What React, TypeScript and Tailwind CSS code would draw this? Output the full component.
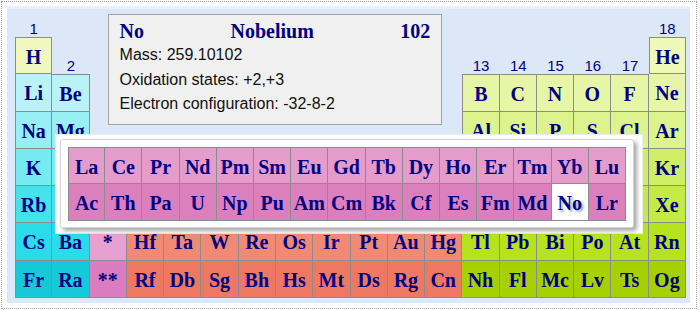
import React from "react";

type Sym = string | null;

const ROWS: Sym[][] = [
  ["H", null, null, null, null, null, null, null, null, null, null, null, null, null, null, null, null, "He"],
  ["Li", "Be", null, null, null, null, null, null, null, null, null, null, "B", "C", "N", "O", "F", "Ne"],
  ["Na", "Mg", null, null, null, null, null, null, null, null, null, null, "Al", "Si", "P", "S", "Cl", "Ar"],
  ["K", "Ca", "Sc", "Ti", "V", "Cr", "Mn", "Fe", "Co", "Ni", "Cu", "Zn", "Ga", "Ge", "As", "Se", "Br", "Kr"],
  ["Rb", "Sr", "Y", "Zr", "Nb", "Mo", "Tc", "Ru", "Rh", "Pd", "Ag", "Cd", "In", "Sn", "Sb", "Te", "I", "Xe"],
  ["Cs", "Ba", "*", "Hf", "Ta", "W", "Re", "Os", "Ir", "Pt", "Au", "Hg", "Tl", "Pb", "Bi", "Po", "At", "Rn"],
  ["Fr", "Ra", "**", "Rf", "Db", "Sg", "Bh", "Hs", "Mt", "Ds", "Rg", "Cn", "Nh", "Fl", "Mc", "Lv", "Ts", "Og"],
];

const LANTHANIDES = ["La", "Ce", "Pr", "Nd", "Pm", "Sm", "Eu", "Gd", "Tb", "Dy", "Ho", "Er", "Tm", "Yb", "Lu"];
const ACTINIDES = ["Ac", "Th", "Pa", "U", "Np", "Pu", "Am", "Cm", "Bk", "Cf", "Es", "Fm", "Md", "No", "Lr"];

// labels shown in the empty cell above each group
const GROUP_LABELS: Record<number, string> = { 1: "2", 12: "13", 13: "14", 14: "15", 15: "16", 16: "17" };

const sBlock = [
  "bg-[#f0f8c0]",
  "bg-[#b9f3f7]",
  "bg-[#97eef3]",
  "bg-[#76eaf1]",
  "bg-[#45e2ed]",
  "bg-[#2adbe9]",
  "bg-[#17c9d7]",
];
const pBlock = [
  "bg-[#eef8b8]",
  "bg-[#e6f6a6]",
  "bg-[#dcf38e]",
  "bg-[#d0ee64]",
  "bg-[#c4ea46]",
  "bg-[#b6e21e]",
  "bg-[#a6d000]",
];

function cellColor(row: number, col: number): string {
  if (col <= 1) return sBlock[row];
  if (col >= 12) return pBlock[row];
  if (col === 2 && row === 5) return "bg-[#e8a0d0]";
  if (col === 2 && row === 6) return "bg-[#dc7cc0]";
  if (row === 6) return "bg-[#ee7862]";
  return "bg-[#f08a74]";
}

const symbolText = "font-['Liberation_Serif',serif] font-bold text-[20px] text-[#000080] leading-none";
const labelText = "font-['Liberation_Sans',Arial,sans-serif] text-[15px] leading-[17px] text-[#000080]";

function Element({ sym, bg, top, left }: { sym: string; bg: string; top: boolean; left: boolean }) {
  return (
    <div
      className={`flex items-center justify-center pt-[2px] border-r border-b border-[#8c8c8c] ${top ? "border-t" : ""} ${
        left ? "border-l" : ""
      } ${bg}`}
    >
      <span className={symbolText}>{sym}</span>
    </div>
  );
}

function InfoBox() {
  return (
    <div className="col-start-3 col-span-10 row-start-1 row-span-4 self-start ml-[18px] mr-[20px] -mt-px h-[111px] bg-[#f0f0f0] border border-[#a3a3a3] px-[11px] pt-[4px]">
      <div className="flex justify-between items-center h-[24px]">
        <span className={symbolText}>No</span>
        <span className={symbolText}>Nobelium</span>
        <span className={symbolText}>102</span>
      </div>
      <div className="font-['Liberation_Sans',Arial,sans-serif] text-[16px] leading-[24.5px] text-[#111]">
        <p>Mass: 259.10102</p>
        <p>Oxidation states: +2,+3</p>
        <p>Electron configuration: -32-8-2</p>
      </div>
    </div>
  );
}

function SeriesPopup() {
  return (
    <div className="absolute left-[48px] top-[125px] w-[588px] h-[100px] bg-white border border-[#ececec] p-[4px]">
      <div className="w-[574px] h-[89px] rounded-[3px] border border-[#d6d6d6] bg-white shadow-[3px_3px_4px_rgba(0,0,0,0.35)] pl-[7px] pt-[7px]">
        <div className="grid grid-cols-15 w-[558px]">
          {LANTHANIDES.map((s, i) => (
            <div
              key={s}
              className={`h-[37px] flex items-center justify-center pt-[2px] bg-[#e69ccb] border-t border-r border-b border-[#8c8c8c] ${
                i === 0 ? "border-l" : ""
              }`}
            >
              <span className={symbolText}>{s}</span>
            </div>
          ))}
          {ACTINIDES.map((s, i) =>
            s === "No" ? (
              <div key={s} className="h-[37px] flex items-center justify-center pt-[2px] bg-white border-r border-b border-[#8c8c8c]">
                <span className={`${symbolText} [text-shadow:2px_2px_2px_#9aa6c4]`}>{s}</span>
              </div>
            ) : (
              <div
                key={s}
                className={`h-[37px] flex items-center justify-center pt-[2px] bg-[#dc7fbd] border-r border-b border-[#8c8c8c] ${
                  i === 0 ? "border-l" : ""
                }`}
              >
                <span className={symbolText}>{s}</span>
              </div>
            )
          )}
        </div>
      </div>
    </div>
  );
}

export default function App() {
  const cells: React.ReactNode[] = [];

  // group number row above the first period
  for (let c = 0; c < 18; c++) {
    if (c >= 2 && c <= 11) continue;
    cells.push(
      <div key={`g${c}`} className={`flex items-end justify-center ${labelText}`}>
        {c === 0 ? "1" : c === 17 ? "18" : ""}
      </div>
    );
  }

  ROWS.forEach((row, r) => {
    row.forEach((sym, c) => {
      if (sym === null) {
        if (r <= 2 && c >= 2 && c <= 11) return; // under the info box
        cells.push(
          <div key={`e${r}-${c}`} className={`flex items-end justify-center ${labelText}`}>
            {r === 0 ? GROUP_LABELS[c] ?? "" : ""}
          </div>
        );
        return;
      }
      const top = r === 0 || ROWS[r - 1][c] === null;
      const left = c === 0 || row[c - 1] === null;
      cells.push(<Element key={sym} sym={sym} bg={cellColor(r, c)} top={top} left={left} />);
    });
  });

  return (
    <div className="w-[700px] h-[310px] bg-white p-px">
      <div className="w-[696px] h-[308px] border border-dotted border-[#a0a0a0] px-[5px] pt-[4px]">
        <div className="relative w-[683px] h-[297px] bg-[#dce8f8] border-t-[3px] border-[#e9f0fa] pl-[8px] pt-[6px]">
          <div className="grid grid-cols-18 grid-rows-[22px_repeat(7,37.28px)] w-[671px]">
            <InfoBox />
            {cells}
          </div>
          <SeriesPopup />
        </div>
      </div>
    </div>
  );
}
